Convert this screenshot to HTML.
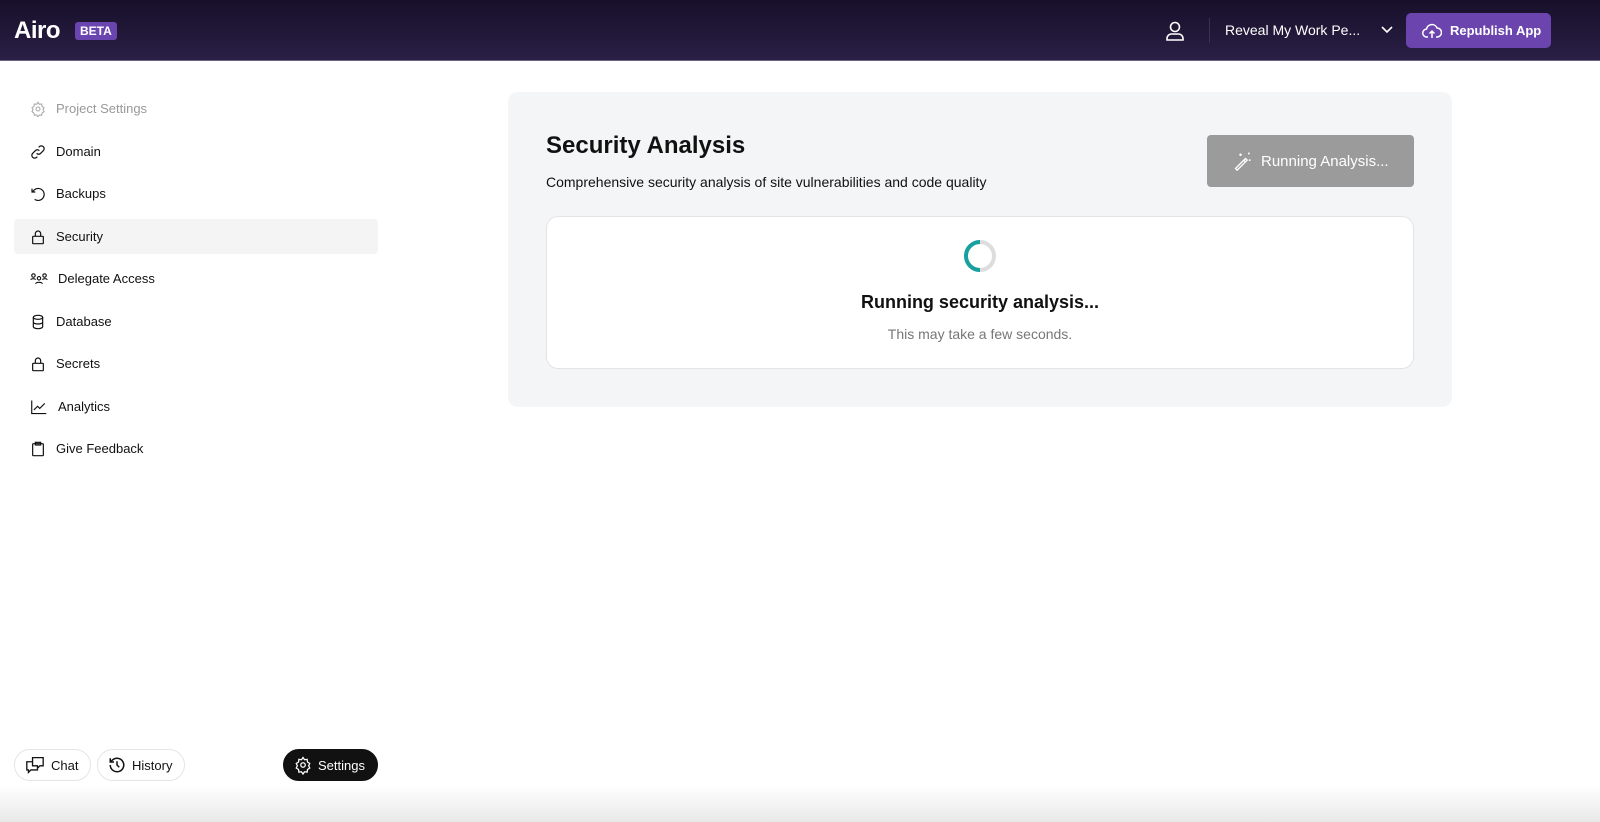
<!DOCTYPE html>
<html><head><meta charset="utf-8"><style>
*{box-sizing:border-box;margin:0;padding:0}
body{width:1600px;height:822px;overflow:hidden;background:#fff;font-family:"Liberation Sans",sans-serif;color:#111;position:relative}
.hdr{position:absolute;left:0;top:0;width:1600px;height:61px;background:linear-gradient(180deg,#17102a 0%,#2a1f45 100%);border-bottom:1px solid #6b6080}
.logo{position:absolute;left:14px;top:17px;color:#fff;font-size:24px;font-weight:bold;letter-spacing:-0.5px}
.beta{position:absolute;left:75px;top:22px;background:#6a45b0;color:#fff;font-size:12px;font-weight:bold;padding:2px 5px;border-radius:3px}
.nav{position:absolute;left:14px;width:364px;height:35px;display:flex;align-items:center;padding-left:16px;font-size:13px;color:#111}
.nav svg{margin-right:10px}
.nav.act{background:#f4f4f5;border-radius:4px}
.card{position:absolute;left:508px;top:92px;width:944px;height:315px;background:#f4f5f6;border-radius:10px}
.inner{position:absolute;left:38px;top:124px;width:868px;height:153px;background:#fff;border:1px solid #e4e4e7;border-radius:12px;text-align:center}
.pill{position:absolute;top:749px;height:32px;border:1px solid #e5e5e5;border-radius:16px;display:flex;align-items:center;font-size:13px;padding:0 12px 0 10px;background:#fff}
.pill svg{margin-right:6px}
</style></head><body>
<div class="hdr">
 <div class="logo">Airo</div><div class="beta">BETA</div>
 <svg style="position:absolute;left:1165px;top:20px" width="20" height="22" viewBox="0 0 20 22" fill="none" stroke="#fff" stroke-width="1.6"><circle cx="10" cy="7" r="4.5"/><path d="M2 20v-1.5c0-2.5 2-4.5 4.5-4.5h7c2.5 0 4.5 2 4.5 4.5V20z"/></svg>
 <div style="position:absolute;left:1209px;top:18px;width:1px;height:25px;background:#3a2f55"></div>
 <div style="position:absolute;left:1225px;top:22px;color:#fff;font-size:14px">Reveal My Work Pe...</div>
 <svg style="position:absolute;left:1380px;top:25px" width="14" height="10" viewBox="0 0 14 10" fill="none" stroke="#fff" stroke-width="1.6"><path d="M2 2l5 5 5-5"/></svg>
 <div style="position:absolute;left:1406px;top:13px;width:145px;height:35px;background:#6b45ad;border-radius:5px;color:#fff;font-size:13px;font-weight:bold;display:flex;align-items:center;padding-left:16px">
  <svg width="20" height="16" viewBox="0 0 20 16" fill="none" stroke="#fff" stroke-width="1.5" style="margin-right:8px"><path d="M6 14H5a4 4 0 0 1-.5-8A5.5 5.5 0 0 1 15 5a4.5 4.5 0 0 1 0 9h-1M10 15V8M7.5 10.5L10 8l2.5 2.5"/></svg>Republish App</div>
</div>

<div class="nav" style="top:91px;color:#999"><svg width="16" height="16" viewBox="0 0 24 24" fill="none" stroke="#aaa" stroke-width="1.6"><circle cx="12" cy="12" r="3"/><path d="M12 2l2 3 3.5-.5.5 3.5 3 2-1.5 3 1.5 3-3 2-.5 3.5-3.5-.5-2 3-2-3-3.5.5-.5-3.5-3-2 1.5-3L3 10l3-2 .5-3.5L10 5z"/></svg>Project Settings</div>
<div class="nav" style="top:134px"><svg width="16" height="16" viewBox="0 0 24 24" fill="none" stroke="#111" stroke-width="1.8"><path d="M10 14a4 4 0 0 0 6 0l4-4a4 4 0 0 0-6-6l-1 1M14 10a4 4 0 0 0-6 0l-4 4a4 4 0 0 0 6 6l1-1"/></svg>Domain</div>
<div class="nav" style="top:176px"><svg width="16" height="16" viewBox="0 0 24 24" fill="none" stroke="#111" stroke-width="1.8"><path d="M3 4v5h5M4 9a9 9 0 1 1 3 11"/></svg>Backups</div>
<div class="nav act" style="top:219px"><svg width="16" height="16" viewBox="0 0 24 24" fill="none" stroke="#111" stroke-width="1.8"><rect x="4" y="11" width="16" height="11" rx="1"/><path d="M8 11V7a4 4 0 0 1 8 0v4"/></svg>Security</div>
<div class="nav" style="top:261px"><svg width="18" height="16" viewBox="0 0 26 20" fill="none" stroke="#111" stroke-width="1.6"><circle cx="5" cy="5" r="2.5"/><circle cx="21" cy="5" r="2.5"/><circle cx="13" cy="9" r="2.5"/><path d="M1 11c1-2 6-2 7 0M18 11c1-2 6-2 7 0M8 17c1-3 9-3 10 0"/></svg>Delegate Access</div>
<div class="nav" style="top:304px"><svg width="16" height="16" viewBox="0 0 24 24" fill="none" stroke="#111" stroke-width="1.8"><ellipse cx="12" cy="5" rx="7" ry="3"/><path d="M5 5v14c0 1.7 3 3 7 3s7-1.3 7-3V5M5 12c0 1.7 3 3 7 3s7-1.3 7-3"/></svg>Database</div>
<div class="nav" style="top:346px"><svg width="16" height="16" viewBox="0 0 24 24" fill="none" stroke="#111" stroke-width="1.8"><rect x="4" y="11" width="16" height="11" rx="1"/><path d="M8 11V7a4 4 0 0 1 8 0v4"/></svg>Secrets</div>
<div class="nav" style="top:389px"><svg width="18" height="16" viewBox="0 0 24 22" fill="none" stroke="#111" stroke-width="1.6"><path d="M2 2v18h20M5 15l5-5 3 3 7-7"/></svg>Analytics</div>
<div class="nav" style="top:431px"><svg width="16" height="16" viewBox="0 0 24 24" fill="none" stroke="#111" stroke-width="1.8"><rect x="4" y="4" width="16" height="18" rx="1"/><rect x="8" y="2" width="8" height="4"/></svg>Give Feedback</div>

<div class="card">
 <div style="position:absolute;left:38px;top:40px;font-size:24px;font-weight:bold;color:#111">Security Analysis</div>
 <div style="position:absolute;left:38px;top:82px;font-size:14px;color:#111">Comprehensive security analysis of site vulnerabilities and code quality</div>
 <div style="position:absolute;left:699px;top:43px;width:207px;height:52px;background:#9b9b9b;border-radius:4px;color:#fff;font-size:15px;display:flex;align-items:center;padding-left:26px">
  <svg width="20" height="20" viewBox="0 0 24 24" fill="none" stroke="#fff" stroke-width="1.6" style="margin-right:8px"><path d="M3 21L15 9l2 2L5 23zM13 11l2 2M9 3v3M7.5 4.5h3M19 2v2M18 3h2M20 10v2M19 11h2"/></svg>Running Analysis...</div>
 <div class="inner">
  <svg style="position:absolute;left:416px;top:22px" width="34" height="34" viewBox="0 0 34 34"><circle cx="17" cy="17" r="14" fill="none" stroke="#ddd" stroke-width="4"/><path d="M17 3A14 14 0 0 0 17 31" fill="none" stroke="#17a0a0" stroke-width="4"/></svg>
  <div style="position:absolute;left:0;right:0;top:75px;font-size:18px;font-weight:bold">Running security analysis...</div>
  <div style="position:absolute;left:0;right:0;top:109px;font-size:14px;color:#777">This may take a few seconds.</div>
 </div>
</div>

<div style="position:absolute;left:0;top:785px;width:1600px;height:37px;background:linear-gradient(180deg,#fff,#e8e8e8)"></div>
<div class="pill" style="left:14px"><svg width="20" height="18" viewBox="0 0 24 22" fill="none" stroke="#111" stroke-width="1.6"><path d="M9 2h13v10h-4l-3 3v-3H9zM9 7H2v10h2v3l3-3h8v-5"/></svg>Chat</div>
<div class="pill" style="left:97px"><svg width="18" height="18" viewBox="0 0 24 24" fill="none" stroke="#111" stroke-width="2"><path d="M3 12a9 9 0 1 0 3-6.7L3 8M3 3v5h5M12 7v5l3 3"/></svg>History</div>
<div class="pill" style="left:283px;background:#111;color:#fff;border-color:#111;width:95px"><svg width="20" height="20" viewBox="0 0 24 24" fill="none" stroke="#fff" stroke-width="1.7"><circle cx="12" cy="12" r="3"/><path d="M12 2l2 3 3.5-.5.5 3.5 3 2-1.5 3 1.5 3-3 2-.5 3.5-3.5-.5-2 3-2-3-3.5.5-.5-3.5-3-2 1.5-3L3 10l3-2 .5-3.5L10 5z"/></svg>Settings</div>
</body></html>
